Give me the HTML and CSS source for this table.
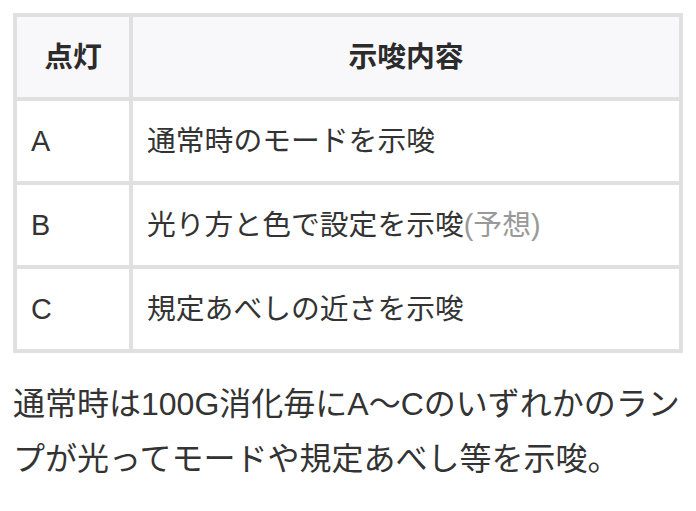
FILE: index.html
```html
<!DOCTYPE html>
<html lang="ja">
<head>
<meta charset="utf-8">
<link rel="stylesheet" href="styles.css">
</head>
<body>
<div class="page">
  <table class="lamp-table">
    <thead>
      <tr>
        <th class="col-lamp">点灯</th>
        <th class="col-desc">示唆内容</th>
      </tr>
    </thead>
    <tbody>
      <tr>
        <td class="col-lamp">A</td>
        <td class="col-desc">通常時のモードを示唆</td>
      </tr>
      <tr>
        <td class="col-lamp">B</td>
        <td class="col-desc">光り方と色で設定を示唆<span class="note">(予想)</span></td>
      </tr>
      <tr>
        <td class="col-lamp">C</td>
        <td class="col-desc">規定あべしの近さを示唆</td>
      </tr>
    </tbody>
  </table>
  <p class="text">通常時は100G消化毎にA〜Cのいずれかのランプが光ってモードや規定あべし等を示唆。</p>
</div>
</body>
</html>
```

FILE: styles.css
```css
html, body {
  margin: 0;
  padding: 0;
  background: #ffffff;
}

body {
  font-family: "Liberation Sans", "Noto Sans CJK JP", sans-serif;
  color: #333333;
}

.page {
  padding: 13px;
}

.lamp-table {
  width: 670px;
  border-spacing: 4px;
  background: #e0e0e0;
  table-layout: fixed;
}

.lamp-table th,
.lamp-table td {
  box-sizing: border-box;
  height: 80px;
  padding: 0 14px;
  font-size: 28.8px;
  line-height: 40px;
  vertical-align: middle;
}

.lamp-table th {
  background: #f8f8fa;
  font-weight: bold;
  text-align: center;
  color: #2b2b2b;
}

.lamp-table td {
  background: #ffffff;
  text-align: left;
  font-weight: normal;
  color: #333333;
}

.col-lamp {
  width: 112px;
}

.note {
  color: #999999;
}

.text {
  margin: 24px 0 0;
  font-size: 32px;
  line-height: 55px;
  color: #333333;
}
```
